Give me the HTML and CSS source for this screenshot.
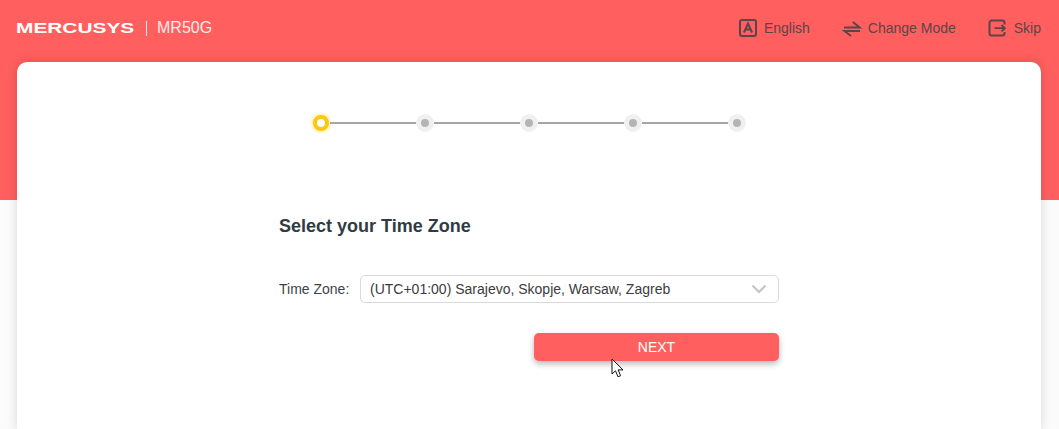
FILE: index.html
```html
<!DOCTYPE html>
<html lang="en">
<head>
    <meta charset="UTF-8">
    <title>MR50G Quick Setup</title>
    <link rel="stylesheet" href="styles.css">
</head>
<body>

<div class="top-bar">
    <div class="brand">
        <span class="logo">MERCUSYS</span>
        <span class="divider"></span>
        <span class="model">MR50G</span>
    </div>
    <div class="top-links">
        <a class="top-link link-lang">
            <svg width="20" height="20" viewBox="0 0 20 20" fill="none" stroke="#5c4448" stroke-width="2">
                <rect x="2" y="2" width="16" height="16" rx="2"></rect>
                <path d="M6 14.500 10 5.500l4 9M7.500 11.500h5"></path>
            </svg>
            English
        </a>
        <a class="top-link link-mode">
            <svg width="20" height="20" viewBox="0 0 20 20" fill="none" stroke="#5c4448" stroke-width="2">
                <path d="M2 9.500h15.500L11 4M18 13H2.500L9 18"></path>
            </svg>
            Change Mode
        </a>
        <a class="top-link link-skip">
            <svg width="20" height="20" viewBox="0 0 20 20" fill="none" stroke="#5c4448" stroke-width="2">
                <path d="M16.500 6.500V4.500a2 2 0 0 0-2-2H3.500a2 2 0 0 0-2 2v11a2 2 0 0 0 2 2h11a2 2 0 0 0 2-2V14"></path>
                <path d="M6.500 10.200H17M13.500 7l3.400 3.200-3.400 3.200" stroke-width="1.800"></path>
            </svg>
            Skip
        </a>
    </div>
</div>

<div class="card">
    <div class="stepper">
        <span class="step step-active"></span>
        <span class="step-line"></span>
        <span class="step"></span>
        <span class="step-line"></span>
        <span class="step"></span>
        <span class="step-line"></span>
        <span class="step"></span>
        <span class="step-line"></span>
        <span class="step"></span>
    </div>

    <div class="form">
        <h2 class="form-title">Select your Time Zone</h2>
        <div class="form-row">
            <label class="form-label">Time Zone:</label>
            <div class="select-box">
                <span>(UTC+01:00) Sarajevo, Skopje, Warsaw, Zagreb</span>
                <svg width="16" height="10" viewBox="0 0 16 10" fill="none" stroke="#c4c4c4" stroke-width="2">
                    <path d="M1.500 1.500 8 8l6.500-6.500"></path>
                </svg>
            </div>
        </div>
        <div class="form-actions">
            <button class="next-btn">NEXT</button>
        </div>
    </div>

    <svg class="cursor" width="14" height="20" viewBox="0 0 14 20">
        <path d="M1 1v15l3.500-3.200 2.500 6 2.600-1.100-2.500-5.800H12z" fill="#fff" stroke="#111" stroke-width="1"></path>
    </svg>
</div>

</body>
</html>
```

FILE: styles.css
```css
body {
    font-family: 'Liberation Sans', Arial, sans-serif;
    margin: 0;
    height: 429px;
    overflow: hidden;
    background: linear-gradient(to bottom, #ff5f5f 200px, #fbfbfb 200px);
}

.top-bar {
    display: flex;
    justify-content: space-between;
    align-items: center;
    height: 62px;
    padding: 0 17px;
    box-sizing: border-box;
}

.brand {
    display: flex;
    align-items: center;
    padding-bottom: 6px;
}

.logo {
    display: inline-block;
    width: 116px;
    margin-left: -1px;
    font-size: 14px;
    font-weight: bold;
    color: #fff;
    transform: scaleX(1.49);
    transform-origin: left center;
    white-space: nowrap;
}

.divider {
    width: 1px;
    height: 15px;
    margin-left: 14px;
    background-color: #ffe3e3;
}

.model {
    margin-left: 10px;
    font-size: 16px;
    color: #ffeaea;
}

.top-links {
    display: flex;
    align-items: center;
    padding-bottom: 6px;
    margin-right: 1px;
}

.top-link {
    display: flex;
    align-items: center;
    gap: 6px;
    font-size: 14px;
    color: #5c4448;
}

.link-mode {
    margin-left: 32px;
}

.link-skip {
    margin-left: 32px;
}

.card {
    height: 367px;
    margin: 0 18px 0 17px;
    background-color: #fff;
    border-radius: 10px 10px 0 0;
    box-shadow: 0 0 12px rgba(0, 0, 0, 0.14);
    position: relative;
}

.stepper {
    display: flex;
    align-items: center;
    justify-content: center;
    width: 434px;
    margin: 0 auto;
    padding-top: 52px;
}

.step {
    flex: none;
    box-sizing: border-box;
    width: 18px;
    height: 18px;
    border: 5.5px solid #f0f0f0;
    border-radius: 50%;
    background-color: #b4b4b4;
}

.step-active {
    width: 16px;
    height: 16px;
    margin: 0 1px;
    border-width: 4.5px;
    border-color: #fcc80f;
    background-color: #fff;
    box-shadow: 0 0 4px #ffd84f;
}

.step-line {
    flex: 1;
    height: 2px;
    background-color: #a6a6a6;
}

.form {
    width: 500px;
    margin: 0 auto;
}

.form-title {
    margin: 83px 0 0;
    font-size: 18px;
    line-height: 22px;
    color: #2f3c43;
}

.form-row {
    display: flex;
    align-items: center;
    margin-top: 38px;
}

.form-label {
    width: 81px;
    flex: none;
    font-size: 14px;
    color: #3a4449;
}

.select-box {
    display: flex;
    flex: 1;
    align-items: center;
    justify-content: space-between;
    box-sizing: border-box;
    height: 28px;
    padding: 0 11px 0 9px;
    border: 1px solid #d9d9d9;
    border-radius: 5px;
    font-size: 14px;
    color: #3c3c3c;
}

.form-actions {
    display: flex;
    justify-content: flex-end;
    margin-top: 30px;
}

.next-btn {
    width: 245px;
    height: 28px;
    padding: 0;
    border: none;
    border-radius: 5px;
    background-color: #ff5f5f;
    color: #fff;
    font-family: inherit;
    font-size: 14px;
    box-shadow: 0 3px 6px rgba(0, 0, 0, 0.28);
}

.cursor {
    position: absolute;
    left: 594px;
    top: 296px;
}
```
